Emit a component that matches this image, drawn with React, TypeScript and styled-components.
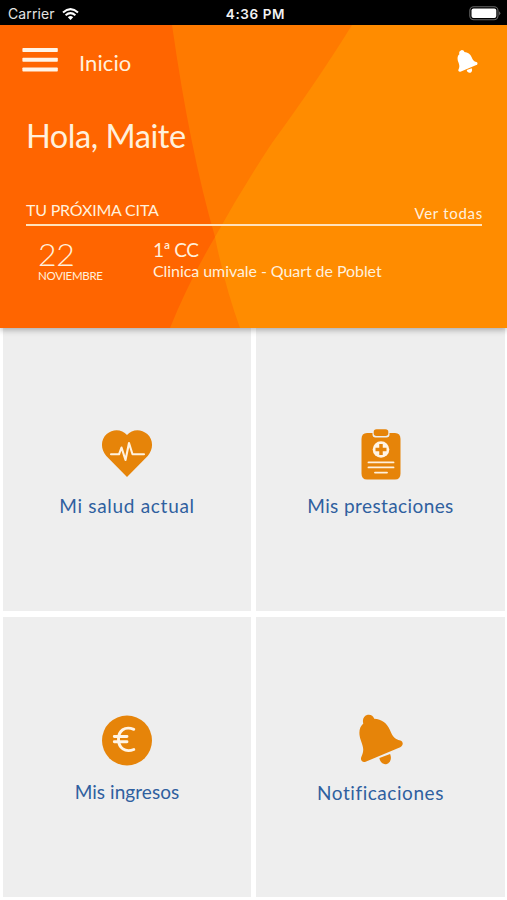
import React from "react";
import styled, { createGlobalStyle } from "styled-components";

const GlobalStyle = createGlobalStyle`
  * { box-sizing: border-box; }
  body { margin: 0; background: #fff; }
  button { border: 0; padding: 0; background: none; color: inherit; font: inherit; }
`;

const Screen = styled.div`
  width: 507px;
  height: 900px;
  display: flex;
  flex-direction: column;
  overflow: hidden;
  background: #fff;
  font-family: Lato, sans-serif;
`;

const StatusBar = styled.div`
  flex: none;
  display: grid;
  grid-template-columns: 1fr auto 1fr;
  align-items: center;
  height: 25px;
  padding: 2px 6px 0 8px;
  background: #000;
  color: #e4e4e4;
  font-family: Inter, sans-serif;
  font-size: 14px;
  line-height: 22px;
`;

const Carrier = styled.div`
  display: flex;
  align-items: center;
  gap: 7px;
  letter-spacing: 0.1px;
`;

const Clock = styled.div`
  padding-left: 2px;
  font-size: 13.5px;
  font-weight: 600;
  letter-spacing: 0.6px;
  color: #f2f2f2;
`;

const BatterySlot = styled.div`
  display: flex;
  justify-content: flex-end;
`;

const Hero = styled.header`
  position: relative;
  z-index: 1;
  flex: none;
  height: 303px;
  color: #fff0dc;
  background: #ff6500;
  box-shadow: 0 2px 6px rgba(0, 0, 0, 0.3);
`;

const Backdrop = styled.svg`
  position: absolute;
  inset: 0;
`;

const HeroContent = styled.div`
  position: relative;
  display: flex;
  flex-direction: column;
  padding: 0 25px 0 26px;
`;

const Toolbar = styled.div`
  display: flex;
  align-items: center;
  height: 72px;
  margin: 0 4px 0 -4px;
`;

const IconButton = styled.button<{ $drop?: number }>`
  display: flex;
  margin-top: ${(p) => p.$drop ?? 0}px;
`;

const Title = styled.div`
  flex: 1;
  margin: 3px 0 0 21px;
  font-size: 22px;
  line-height: 28px;
  letter-spacing: 0.1px;
`;

const Greeting = styled.h1`
  margin: 16px 0 0;
  font-size: 32.5px;
  line-height: 46px;
  font-weight: 400;
  letter-spacing: -0.45px;
`;

const SectionHead = styled.div`
  display: flex;
  justify-content: space-between;
  align-items: flex-end;
  height: 67px;
  border-bottom: 2px solid #ffe2bd;
`;

const SectionTitle = styled.h2`
  margin: 0 0 3px;
  font-size: 16px;
  line-height: 22px;
  font-weight: 400;
  letter-spacing: -0.2px;
`;

const SeeAll = styled.button`
  margin: 0 -1px 1px 0;
  font-size: 15px;
  line-height: 20px;
  letter-spacing: 0.72px;
`;

const Appointment = styled.div`
  display: flex;
  padding: 10px 0 0 12px;
`;

const DateBlock = styled.div`
  width: 115px;
`;

const Day = styled.div`
  padding-top: 1px;
  font-size: 32px;
  line-height: 33px;
  font-weight: 300;
  letter-spacing: -0.4px;
`;

const Month = styled.div`
  font-size: 11.5px;
  line-height: 12px;
  letter-spacing: -0.3px;
`;

const Visit = styled.div`
  padding-top: 2px;
  font-size: 19px;
  line-height: 24px;
  letter-spacing: -0.5px;
`;

const Clinic = styled.div`
  font-size: 16px;
  line-height: 17px;
  letter-spacing: -0.07px;
`;

const Tiles = styled.main`
  flex: 1;
  display: grid;
  grid-template-columns: 248px 249px;
  grid-template-rows: 283px 280px;
  gap: 6px 5px;
  padding: 0 2px 0 3px;
`;

const Tile = styled.button<{ $top: number }>`
  display: flex;
  flex-direction: column;
  align-items: center;
  justify-content: flex-start;
  padding-top: ${(p) => p.$top}px;
  background: #eee;
  color: #2f609f;
`;

const TileLabel = styled.span<{ $spacing: number; $gap: number }>`
  margin-top: ${(p) => p.$gap}px;
  font-size: 19px;
  line-height: 26px;
  letter-spacing: ${(p) => p.$spacing}px;
`;

const ORANGE = "#e68409";

const Wifi = () => (
  <svg width="17" height="12" viewBox="0 0 17 12" fill="none" stroke="#fff" strokeWidth="2">
    <path d="M1 4.5Q8.5-2.2 16 4.5M3.6 7.3Q8.5 3 13.4 7.3" />
    <path d="M8.5 12 5.8 9.2Q8.5 7 11.2 9.2Z" fill="#fff" stroke="none" />
  </svg>
);

const Battery = () => (
  <svg width="32" height="15" viewBox="0 0 32 15">
    <rect x=".8" y=".8" width="28.2" height="13" rx="4" fill="none" stroke="#666" strokeWidth="1.1" />
    <rect x="2.5" y="2.5" width="24.8" height="9.6" rx="2" fill="#fff" />
    <path d="M30.2 5.2Q32.4 7.3 30.2 9.4Z" fill="#777" />
  </svg>
);

const Menu = () => (
  <svg width="36" height="26" viewBox="0 0 36 26" fill="#fff4e6">
    <rect x=".4" y="1" width="35.4" height="4" rx=".8" />
    <rect x=".4" y="10.7" width="35.4" height="4" rx=".8" />
    <rect x=".4" y="20.5" width="35.4" height="4" rx=".8" />
  </svg>
);

const Bell = ({ width, height, color }: { width: number; height: number; color: string }) => (
  <svg width={width} height={height} viewBox="0 0 44 50" fill={color}>
    <path d="M4.3 9C3 4.8 5 1.2 8.7.3C11.7-.3 14.2 1.3 15.2 4.2C22.7 4.5 28.2 9 30.8 15.2C34.3 23.5 35.7 24.2 41.4 26C44.8 27.2 44.3 31.4 41.2 32.8L6.6 47.2C3.4 48.3.9 45.6 2.4 42.3C5.2 36.1 4.6 33.3 1.8 25.7C-.7 18.6.1 12.7 4.3 9Z" />
    <path d="M20.4 43.6 31.1 39.5C33.1 44.2 31.2 48.3 27.9 49.4C24.8 50.4 20.9 48.3 20.4 43.6Z" />
  </svg>
);

const Heart = () => (
  <svg width="52" height="50" viewBox="0 0 52 50">
    <path d="M26 48 5.3 27C-.7 20-.4 10.5 5.7 5C12-.5 21 0 26 6C31 0 40-.5 46.3 5C52.4 10.5 52.7 20 46.7 27Z" fill={ORANGE} />
    <path d="M10 25.3H18L20.5 18.5 24.5 31 28 14 31.5 25.3H43" fill="none" stroke="#fff2df" strokeWidth="2.1" strokeLinecap="round" strokeLinejoin="round" />
  </svg>
);

const Clipboard = () => (
  <svg width="40" height="51" viewBox="0 0 40 51">
    <path d="M6 4H11.5V5.5Q11.5 8.5 14.5 8.5H25.5Q28.5 8.5 28.5 5.5V4H34Q39.5 4 39.5 10V44.5Q39.5 50.5 34 50.5H6Q.5 50.5.5 44.5V10Q.5 4 6 4Z" fill={ORANGE} />
    <path d="M15.5.3H24.5Q27.3.3 27.3 3V4.3Q27.3 7 24.5 7H15.5Q12.7 7 12.7 4.3V3Q12.7.3 15.5.3Z" fill={ORANGE} />
    <circle cx="20" cy="20.5" r="8.3" fill="#fff4e5" />
    <path d="M20 15V26M14.5 20.5H25.5" stroke={ORANGE} strokeWidth="3.5" />
    <path d="M7.5 33.4H32.5M7.5 38.4H32.5M14 43.6H26" stroke="#fff0dc" strokeWidth="1.9" strokeLinecap="round" />
  </svg>
);

const Euro = () => (
  <svg width="50" height="51" viewBox="0 0 50 51" fill="none">
    <circle cx="25" cy="25.5" r="25" fill={ORANGE} />
    <path d="M31.8 14.3C22.6 10.8 16.5 15.8 16.5 24.2C16.5 32.8 23 38 31.8 34.5M12.3 21.5H25M12.3 26.8H25" stroke="#fff4e5" strokeWidth="2.9" strokeLinecap="round" />
  </svg>
);

const tiles = [
  { label: "Mi salud actual", icon: <Heart />, top: 101, gap: 14, spacing: 0.7 },
  { label: "Mis prestaciones", icon: <Clipboard />, top: 101, gap: 13, spacing: 0.4 },
  { label: "Mis ingresos", icon: <Euro />, top: 98, gap: 13, spacing: 0.05 },
  { label: "Notificaciones", icon: <Bell width={44} height={51} color={ORANGE} />, top: 97, gap: 15, spacing: 0.55 },
];

export default function App() {
  return (
    <Screen>
      <GlobalStyle />
      <StatusBar>
        <Carrier>Carrier <Wifi /></Carrier>
        <Clock>4:36 PM</Clock>
        <BatterySlot><Battery /></BatterySlot>
      </StatusBar>
      <Hero>
        <Backdrop width="507" height="303" viewBox="0 0 507 303">
          <path d="M172 0H507V303H170Q188 258 215 212Q190 126 172 0Z" fill="#ff7a00" />
          <path d="M352 0H507V303H240Q225 262 215 212Q241 165 272 118Q318 55 352 0Z" fill="#ff8c00" />
        </Backdrop>
        <HeroContent>
          <Toolbar>
            <IconButton aria-label="Menú" $drop={-2}><Menu /></IconButton>
            <Title>Inicio</Title>
            <IconButton aria-label="Notificaciones" $drop={1}><Bell width={21} height={23} color="#fff" /></IconButton>
          </Toolbar>
          <Greeting>Hola, Maite</Greeting>
          <SectionHead>
            <SectionTitle>TU PRÓXIMA CITA</SectionTitle>
            <SeeAll>Ver todas</SeeAll>
          </SectionHead>
          <Appointment>
            <DateBlock>
              <Day>22</Day>
              <Month>NOVIEMBRE</Month>
            </DateBlock>
            <div>
              <Visit>1ª CC</Visit>
              <Clinic>Clinica umivale - Quart de Poblet</Clinic>
            </div>
          </Appointment>
        </HeroContent>
      </Hero>
      <Tiles>
        {tiles.map((t) => (
          <Tile key={t.label} $top={t.top}>
            {t.icon}
            <TileLabel $spacing={t.spacing} $gap={t.gap}>{t.label}</TileLabel>
          </Tile>
        ))}
      </Tiles>
    </Screen>
  );
}
